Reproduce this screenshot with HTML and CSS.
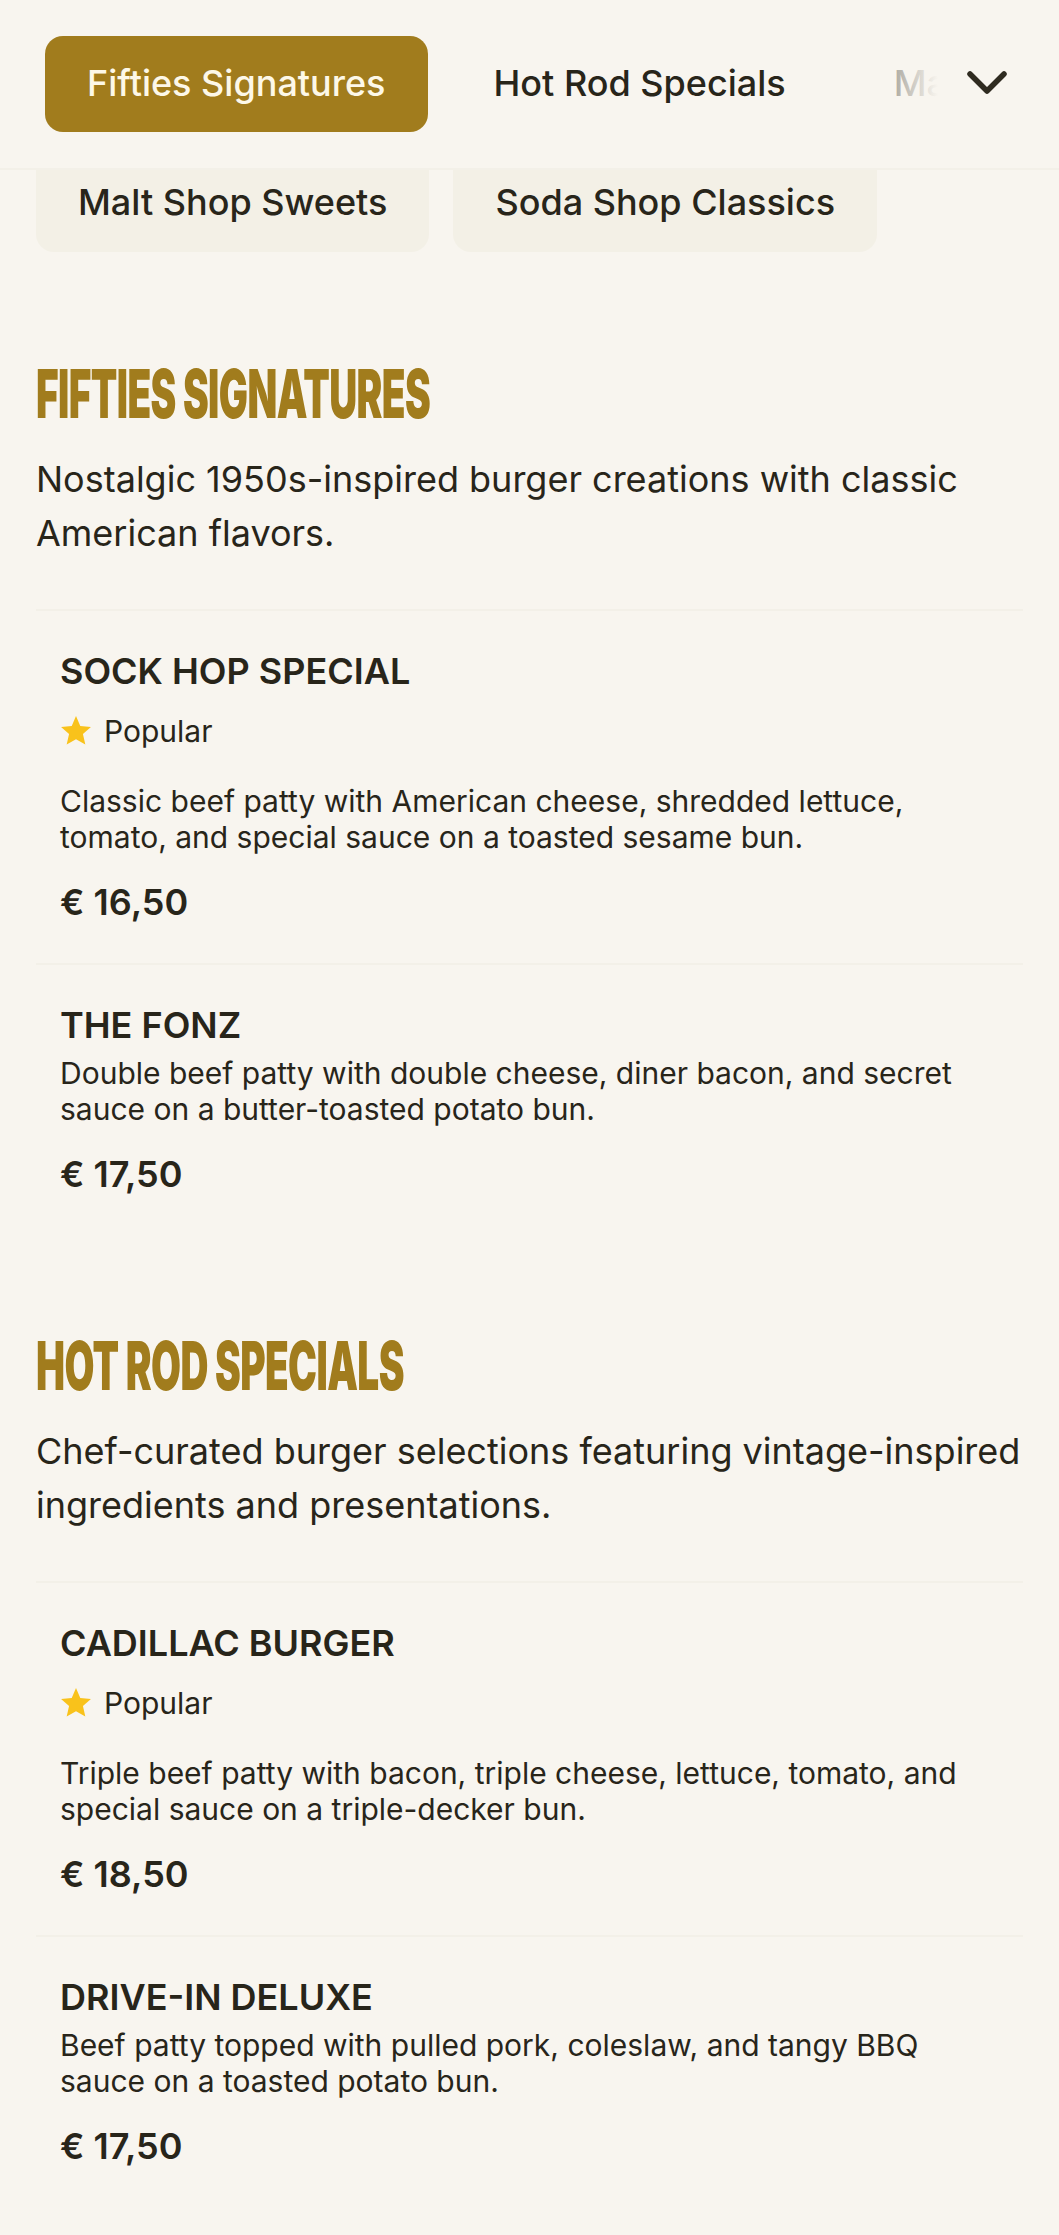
FILE: index.html
```html
<!DOCTYPE html>
<html lang="en">
<head>
<meta charset="utf-8">
<title>Menu</title>
<link rel="stylesheet" href="styles.css">
</head>
<body>
<header class="topbar">
  <nav class="tabs">
    <a class="tab tab-active">Fifties Signatures</a>
    <a class="tab">Hot Rod Specials</a>
    <a class="tab">Malt Shop Sweets</a>
  </nav>
  <div class="chevron-wrap">
    <svg class="chevron" viewBox="0 0 40 24" width="40" height="24"><path d="M3 3 L20 20 L37 3" fill="none" stroke="#2f2b20" stroke-width="5.5" stroke-linecap="round" stroke-linejoin="round"/></svg>
  </div>
</header>
<div class="chips">
  <a class="chip">Malt Shop Sweets</a>
  <a class="chip">Soda Shop Classics</a>
</div>
<main>
  <section class="section">
    <h2 class="section-title"><span class="title-text">Fifties Signatures</span></h2>
    <p class="section-desc">Nostalgic 1950s-inspired burger creations with classic American flavors.</p>
    <article class="item">
      <h3 class="item-name">SOCK HOP SPECIAL</h3>
      <div class="badge"><svg class="star" viewBox="0 0 24 24" width="32" height="32"><path d="M12 .8l3.2 7.5 8 .7-6 5.3 1.8 7.9L12 18.1l-7 4.1 1.8-7.9-6-5.3 8-.7z" fill="#f9c21b"/></svg><span>Popular</span></div>
      <p class="item-desc">Classic beef patty with American cheese, shredded lettuce, tomato, and special sauce on a toasted sesame bun.</p>
      <div class="price">€ 16,50</div>
    </article>
    <article class="item">
      <h3 class="item-name">THE FONZ</h3>
      <p class="item-desc">Double beef patty with double cheese, diner bacon, and secret sauce on a butter-toasted potato bun.</p>
      <div class="price">€ 17,50</div>
    </article>
  </section>
  <section class="section">
    <h2 class="section-title"><span class="title-text">Hot Rod Specials</span></h2>
    <p class="section-desc">Chef-curated burger selections featuring vintage-inspired ingredients and presentations.</p>
    <article class="item">
      <h3 class="item-name">CADILLAC BURGER</h3>
      <div class="badge"><svg class="star" viewBox="0 0 24 24" width="32" height="32"><path d="M12 .8l3.2 7.5 8 .7-6 5.3 1.8 7.9L12 18.1l-7 4.1 1.8-7.9-6-5.3 8-.7z" fill="#f9c21b"/></svg><span>Popular</span></div>
      <p class="item-desc">Triple beef patty with bacon, triple cheese, lettuce, tomato, and special sauce on a triple-decker bun.</p>
      <div class="price">€ 18,50</div>
    </article>
    <article class="item">
      <h3 class="item-name">DRIVE-IN DELUXE</h3>
      <p class="item-desc">Beef patty topped with pulled pork, coleslaw, and tangy BBQ sauce on a toasted potato bun.</p>
      <div class="price">€ 17,50</div>
    </article>
  </section>
</main>
</body>
</html>
```
FILE: styles.css
```css
* { box-sizing: border-box; }
html, body { margin: 0; padding: 0; }
body { background: #f8f5ef; color: #28251a; font-family: Inter, "Liberation Sans", sans-serif; height: 2235px; overflow: hidden; }
.topbar { display: flex; align-items: center; height: 170px; border-bottom: 2px solid #f3f0e8; padding: 0 0 0 45px; position: relative; overflow: hidden; }
.tabs { display: flex; gap: 24px; white-space: nowrap; }
.tab { display: block; flex: none; height: 96px; line-height: 94px; padding: 0 42px; font-size: 36px; font-weight: 500; color: #28251a; border-radius: 18px; }
.tab-active { background: #a17c1d; color: #fdf8e8; }
.chevron-wrap { position: absolute; right: 0; top: 0; width: 209px; height: 168px; display: flex; align-items: center; justify-content: flex-end; padding: 0 52px 2px 0; background: linear-gradient(to right, rgba(248,245,239,0) 0, rgba(248,245,239,0.68) 48px, #f8f5ef 88px); }
.chevron { display: block; }
.chips { display: flex; gap: 24px; padding: 0 36px; }
.chip { display: block; height: 82px; padding: 10px 42px 0; font-size: 36px; font-weight: 500; background: #f3f0e6; border-radius: 0 0 18px 18px; }
.section { padding: 0 36px; }
.section-title { margin: 107px 0 0; font-family: Inter, "Liberation Sans", sans-serif; font-size: 68px; font-weight: 900; text-transform: uppercase; color: #a17c1d; line-height: 68px; white-space: nowrap; }
.title-text { display: inline-block; transform: scaleX(0.569); transform-origin: left center; letter-spacing: -1px; }
.section-desc { margin: 25px 0 49px; font-size: 36px; line-height: 54px; }
.item { border-top: 2px solid #f3f0e8; padding: 39px 24px 39px; }
.item-name { margin: 0; font-size: 36px; font-weight: 600; line-height: 42px; }
.badge { display: flex; align-items: center; gap: 12px; font-size: 30px; margin-top: 19px; height: 40px; }
.item-desc { margin: 0; font-size: 30px; line-height: 36px; }
.badge + .item-desc { margin-top: 32px; }
.item-name + .item-desc { margin-top: 9px; }
.price { margin-top: 25px; font-size: 36px; font-weight: 600; line-height: 44px; }
.section + .section { margin-top: -11px; }
```
